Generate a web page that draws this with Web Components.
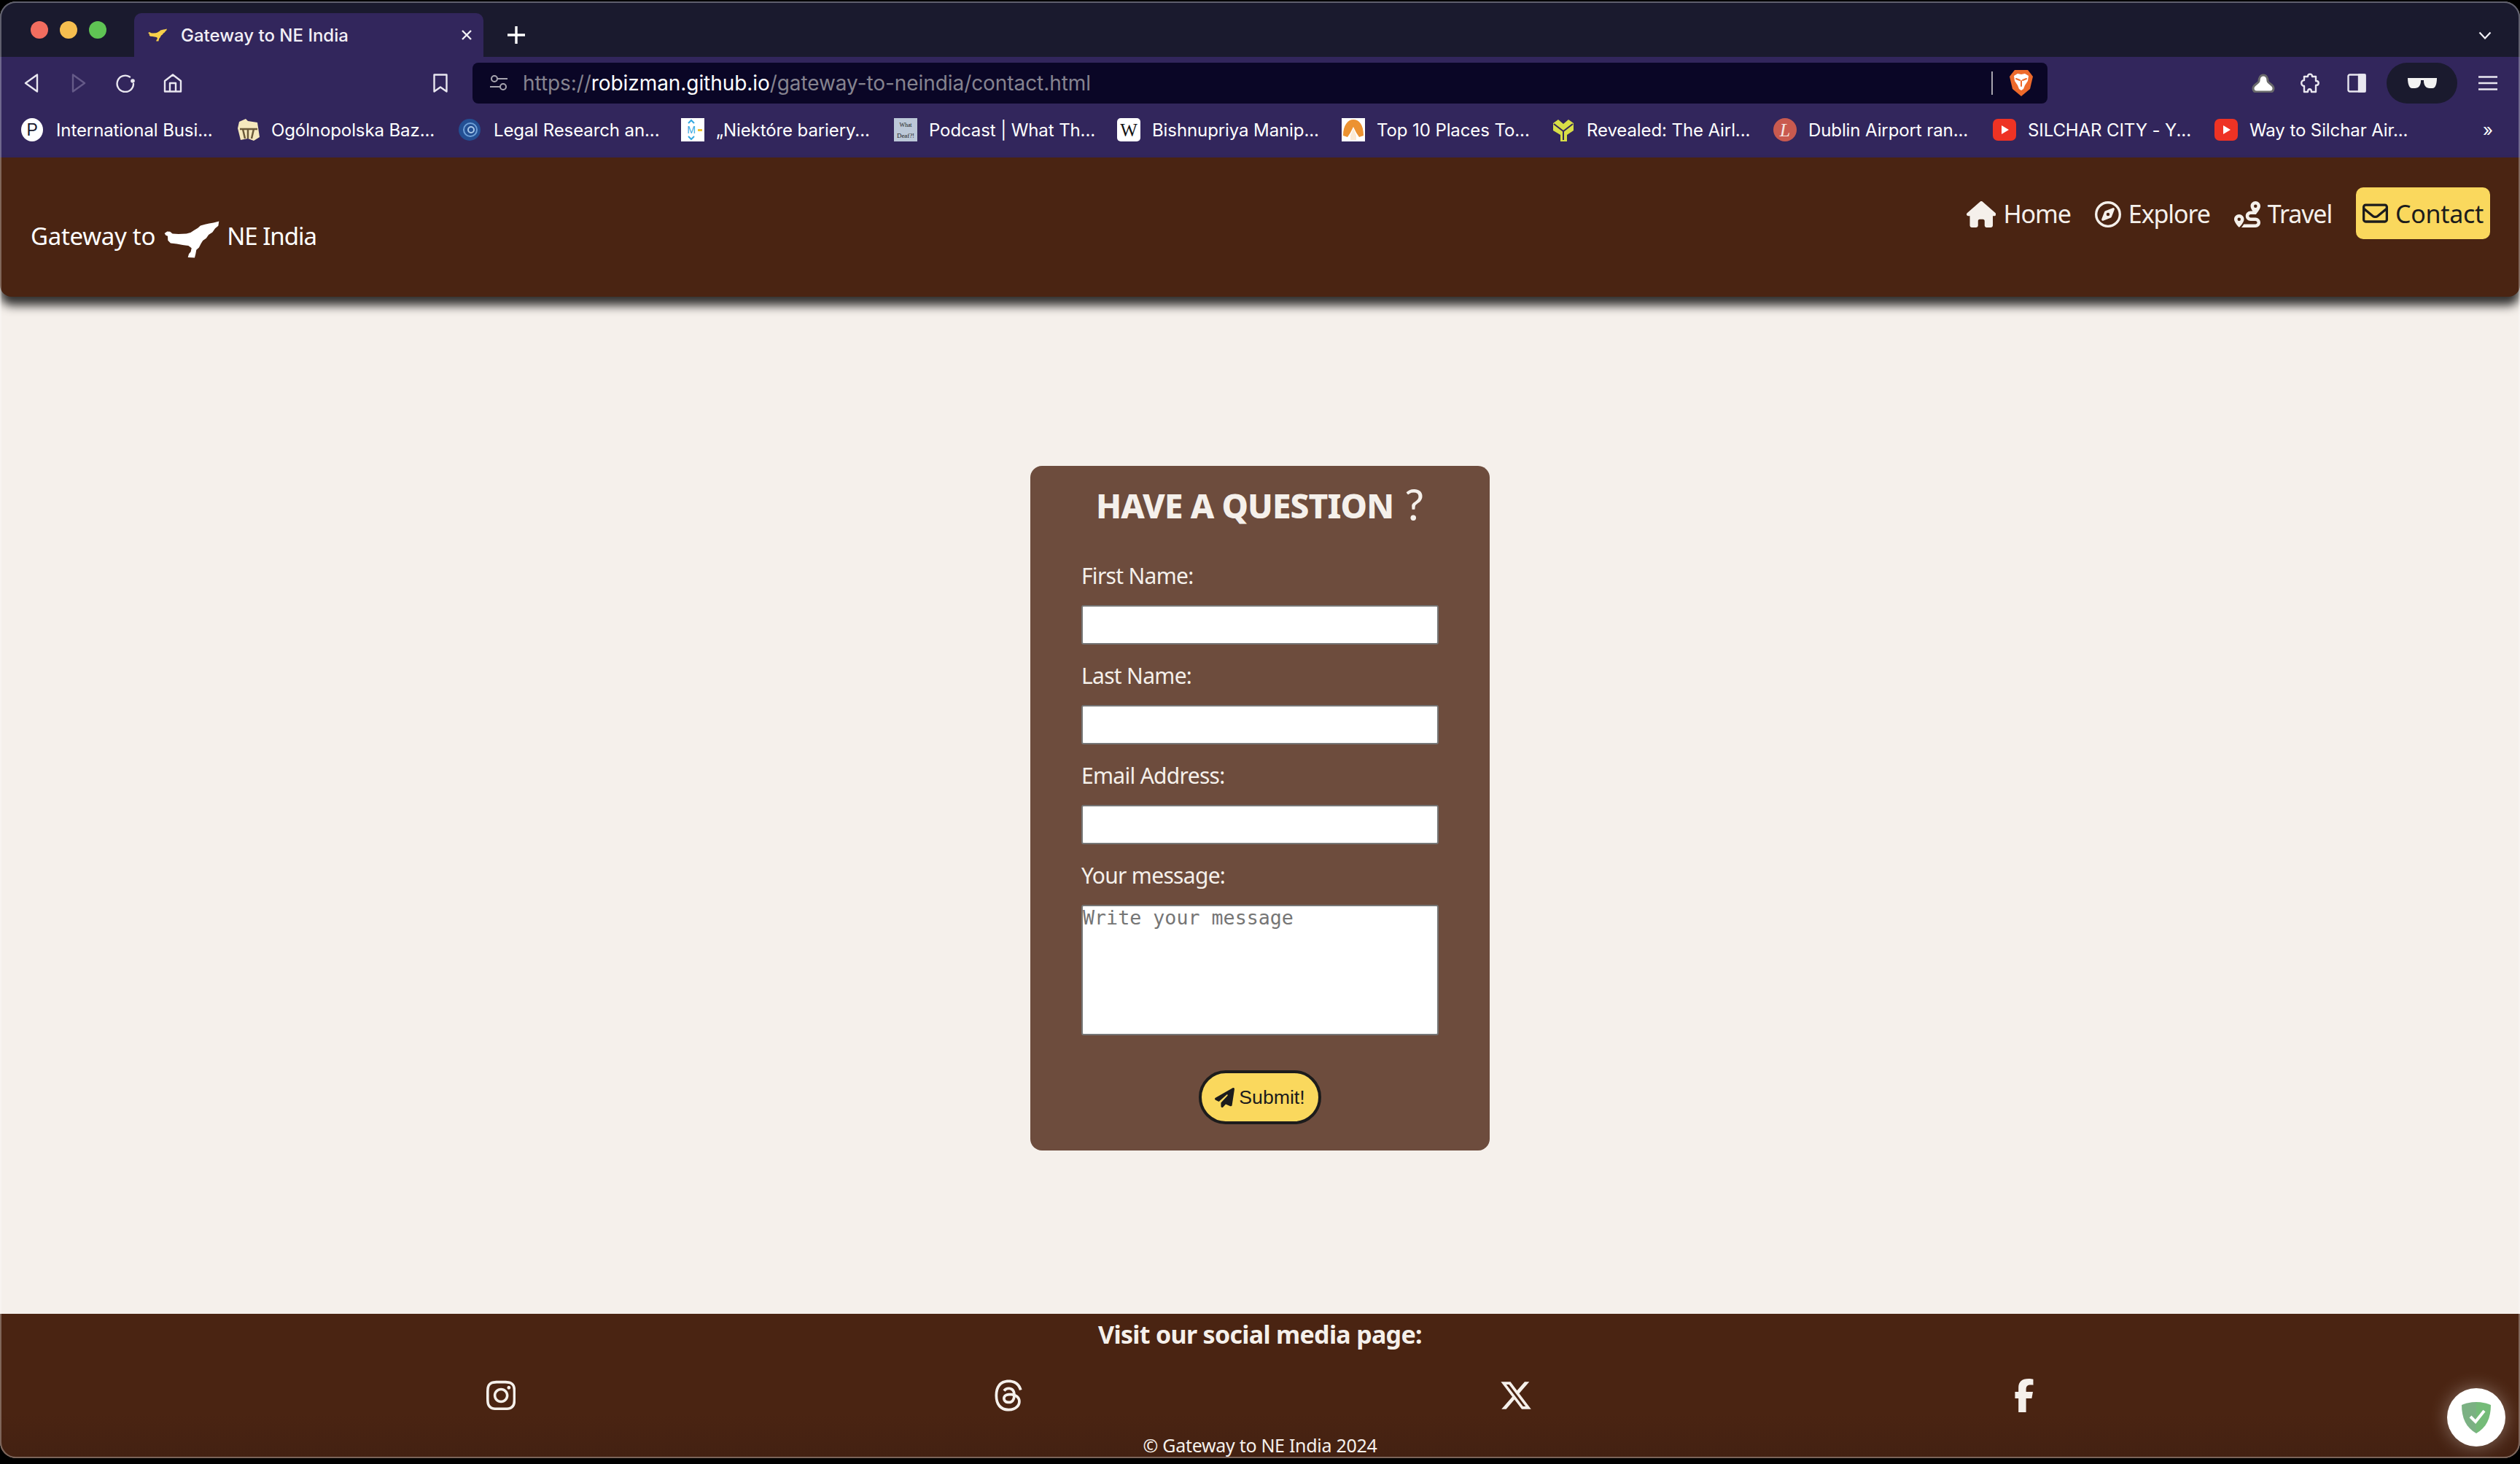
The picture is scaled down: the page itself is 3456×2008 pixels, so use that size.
<!DOCTYPE html>
<html lang="en">
<head>
<meta charset="utf-8">
<title>Gateway to NE India</title>
<style>
  html, body { margin: 0; padding: 0; background: #000; }
  body { width: 3456px; height: 2008px; overflow: hidden; font-family: "Noto Sans", sans-serif; }
</style>
</head>
<body>
<browser-window>
  <browser-tabs></browser-tabs>
  <browser-toolbar></browser-toolbar>
  <bookmark-bar>
    <bookmark-item w="295" label="International Busi..." icon="pearson"></bookmark-item>
    <bookmark-item w="305" label="Ogólnopolska Baz..." icon="baza"></bookmark-item>
    <bookmark-item w="305" label="Legal Research an..." icon="legal"></bookmark-item>
    <bookmark-item w="292" label="„Niektóre bariery..." icon="bariery"></bookmark-item>
    <bookmark-item w="306" label="Podcast | What Th..." icon="podcast"></bookmark-item>
    <bookmark-item w="308" label="Bishnupriya Manip..." icon="wiki"></bookmark-item>
    <bookmark-item w="288" label="Top 10 Places To..." icon="places"></bookmark-item>
    <bookmark-item w="304" label="Revealed: The Airl..." icon="airline"></bookmark-item>
    <bookmark-item w="301" label="Dublin Airport ran..." icon="dublin"></bookmark-item>
    <bookmark-item w="304" label="SILCHAR CITY - Y..." icon="youtube"></bookmark-item>
    <bookmark-item w="321" label="Way to Silchar Air..." icon="youtube"></bookmark-item>
  </bookmark-bar>
  <site-header>
    <nav-link icon="home">Home</nav-link>
    <nav-link icon="compass">Explore</nav-link>
    <nav-link icon="route">Travel</nav-link>
    <nav-link icon="envelope" active>Contact</nav-link>
  </site-header>
  <site-main>
    <contact-form></contact-form>
  </site-main>
  <site-footer>
    <social-link icon="instagram"></social-link>
    <social-link icon="threads"></social-link>
    <social-link icon="x"></social-link>
    <social-link icon="facebook"></social-link>
  </site-footer>
  <guard-badge></guard-badge>
</browser-window>

<script>
// the NE India silhouette, used for the site logo and the tab favicon
const MAP_PATH = 'M677 329L688 321L700 322L710 330L735 332L768 330L785 326L800 316L815 307L826 297L845 292L862 288L880 285L903 279L900 298L887 308L876 324L860 335L850 349L836 359L828 372L820 388L809 398L806 414L802 430L774 429L778 414L786 405L789 390L776 380L752 377L728 373L702 370L691 358L690 340L682 337Z';

const FA = {
  home: ['0 0 576 512', 'M575.8 255.5c0 18-15 32.1-32 32.1h-32l.7 160.2c0 2.7-.2 5.4-.5 8.1V472c0 22.1-17.9 40-40 40H456c-1.1 0-2.2 0-3.3-.1c-1.4 .1-2.8 .1-4.2 .1H416 392c-22.1 0-40-17.9-40-40V448 384c0-17.7-14.3-32-32-32H256c-17.7 0-32 14.3-32 32v64 24c0 22.1-17.9 40-40 40H160 128.1c-1.5 0-3-.1-4.5-.2c-1.2 .1-2.4 .2-3.6 .2H104c-22.1 0-40-17.9-40-40V360c0-.9 0-1.9 .1-2.8V287.6H32c-18 0-32-14-32-32.1c0-9 3-17 10-24L266.4 8c7-7 15-8 22-8s15 2 21 7L564.8 231.5c8 7 12 15 11 24z'],
  compass: ['0 0 512 512', 'M464 256A208 208 0 1 0 48 256a208 208 0 1 0 416 0zM0 256a256 256 0 1 1 512 0A256 256 0 1 1 0 256zm306.7 69.1L162.4 380.6c-19.4 7.5-38.5-11.6-31-31l55.5-144.3c3.3-8.5 9.9-15.1 18.4-18.4l144.3-55.5c19.4-7.5 38.5 11.6 31 31L325.1 306.7c-3.2 8.5-9.9 15.1-18.4 18.4zM288 256a32 32 0 1 0 -64 0 32 32 0 1 0 64 0z'],
  route: ['0 0 512 512', 'M512 96c0 50.2-59.1 125.1-84.6 155c-3.8 4.4-9.4 6.1-14.5 5H320c-17.7 0-32 14.3-32 32s14.3 32 32 32h96c53 0 96 43 96 96s-43 96-96 96H139.6c8.7-9.9 19.3-22.6 30-36.8c6.3-8.4 12.8-17.6 19-27.2H416c17.7 0 32-14.3 32-32s-14.3-32-32-32H320c-53 0-96-43-96-96s43-96 96-96h39.8c-21-31.5-39.8-67.7-39.8-96c0-53 43-96 96-96s96 43 96 96zM117.1 489.1c-3.8 4.3-7.2 8.1-10.1 11.3l-1.8 2-.2-.2c-6 4.6-14.6 4-20-1.8C59.8 473 0 402.5 0 352c0-53 43-96 96-96s96 43 96 96c0 30-21.1 67-43.5 97.9c-10.7 14.7-21.7 28-30.8 38.5l-.6 .7zM128 352a32 32 0 1 0 -64 0 32 32 0 1 0 64 0zM416 128a32 32 0 1 0 0-64 32 32 0 1 0 0 64z'],
  envelope: ['0 0 512 512', 'M64 112c-8.8 0-16 7.2-16 16v22.1L220.5 291.7c20.7 17 50.4 17 71.1 0L464 150.1V128c0-8.8-7.2-16-16-16H64zM48 212.2V384c0 8.8 7.2 16 16 16H448c8.8 0 16-7.2 16-16V212.2L322 328.8c-38.4 31.5-93.7 31.5-132 0L48 212.2zM0 128C0 92.7 28.7 64 64 64H448c35.3 0 64 28.7 64 64V384c0 35.3-28.7 64-64 64H64c-35.3 0-64-28.7-64-64V128z'],
  plane: ['0 0 512 512', 'M498.1 5.6c10.1 7 15.4 19.1 13.5 31.2l-64 416c-1.5 9.7-7.4 18.2-16 23s-18.9 5.4-28 1.6L284 427.7l-68.5 74.1c-8.9 9.7-22.9 12.9-35.2 8.1S160 493.2 160 480V396.4c0-4 1.5-7.8 4.2-10.7L331.8 202.8c5.8-6.3 5.6-16-.4-22s-15.7-6.4-22-.7L106 360.8 17.7 316.6C7.1 311.3 .3 300.7 0 288.9s5.9-22.8 16.1-28.7l448-256c10.7-6.1 23.9-5.5 34 1.4z'],
  instagram: ['0 0 448 512', 'M224.1 141c-63.6 0-114.9 51.3-114.9 114.9s51.3 114.9 114.9 114.9S339 319.5 339 255.9 287.7 141 224.1 141zm0 189.6c-41.1 0-74.7-33.5-74.7-74.7s33.5-74.7 74.7-74.7 74.7 33.5 74.7 74.7-33.6 74.7-74.7 74.7zm146.4-194.3c0 14.9-12 26.8-26.8 26.8-14.9 0-26.8-12-26.8-26.8s12-26.8 26.8-26.8 26.8 12 26.8 26.8zm76.1 27.2c-1.7-35.9-9.9-67.7-36.2-93.9-26.2-26.2-58-34.4-93.9-36.2-37-2.1-147.9-2.1-184.9 0-35.8 1.7-67.6 9.9-93.9 36.1s-34.4 58-36.2 93.9c-2.1 37-2.1 147.9 0 184.9 1.7 35.9 9.9 67.7 36.2 93.9s58 34.4 93.9 36.2c37 2.1 147.9 2.1 184.9 0 35.9-1.7 67.7-9.9 93.9-36.2 26.2-26.2 34.4-58 36.2-93.9 2.1-37 2.1-147.8 0-184.8zM398.8 388c-7.8 19.6-22.9 34.7-42.6 42.6-29.5 11.7-99.5 9-132.1 9s-102.7 2.6-132.1-9c-19.6-7.8-34.7-22.9-42.6-42.6-11.7-29.5-9-99.5-9-132.1s-2.6-102.7 9-132.1c7.8-19.6 22.9-34.7 42.6-42.6 29.5-11.7 99.5-9 132.1-9s102.7-2.6 132.1 9c19.6 7.8 34.7 22.9 42.6 42.6 11.7 29.5 9 99.5 9 132.1s2.7 102.7-9 132.1z'],
  threads: ['0 0 448 512', 'M331.5 235.7c2.2 .9 4.2 1.9 6.3 2.8c29.2 14.1 50.6 35.2 61.8 61.4c15.7 36.5 17.2 95.8-30.3 143.2c-36.2 36.2-80.3 52.5-142.6 53h-.3c-70.2-.5-124.1-24.1-160.4-70.2c-32.3-41-48.9-98.1-49.5-169.6V256v-.2C17 184.3 33.6 127.2 65.9 86.2C102.2 40.1 156.2 16.5 226.4 16h.3c70.3 .5 124.9 24 162.3 69.9c18.4 22.7 32 50 40.6 81.7l-40.4 10.8c-7.1-25.8-17.8-47.8-32.2-65.4c-29.2-35.8-73-54.2-130.5-54.6c-57 .5-100.1 18.8-128.2 54.4C72.1 146.1 58.5 194.3 58 256c.5 61.7 14.1 109.9 40.3 143.3c28 35.6 71.2 53.9 128.2 54.4c51.4-.4 85.4-12.6 113.7-40.9c32.3-32.2 31.7-71.8 21.4-95.9c-6.1-14.2-17.1-26-31.9-34.9c-3.7 26.9-11.8 48.3-24.7 64.8c-17.1 21.8-41.4 33.6-72.7 35.3c-23.6 1.3-46.3-4.4-63.9-16c-20.8-13.8-33-34.8-34.3-59.3c-2.5-48.3 35.7-83 95.2-86.4c21.1-1.2 40.9-.3 59.2 2.8c-2.4-14.8-7.3-26.6-14.6-35.2c-10-11.7-25.6-17.7-46.2-17.8H227c-16.6 0-39 4.6-53.3 26.3l-34.4-23.6c19.2-29.1 50.3-45.1 87.8-45.1h.8c62.6 .4 99.9 39.5 103.7 107.7l-.2 .2zm-156 68.8c1.3 25.1 28.4 36.8 54.6 35.3c25.6-1.4 54.6-11.4 59.5-73.2c-13.2-2.9-27.8-4.4-43.4-4.4c-4.8 0-9.6 .1-14.4 .4c-42.9 2.4-57.2 23.2-56.2 41.8l-.1 .1z'],
  x: ['0 0 512 512', 'M389.2 48h70.6L305.6 224.2 487 464H345L233.7 318.6 106.5 464H35.8L200.7 275.5 26.8 48H172.4L272.9 180.9 389.2 48zM364.4 421.8h39.1L151.1 88h-42L364.4 421.8z'],
  facebook: ['0 0 320 512', 'M80 299.3V512H196V299.3h86.5l18-97.8H196V166.9c0-51.7 20.3-71.5 72.7-71.5c16.3 0 29.4 .4 37 1.2V7.9C291.4 4 256.4 0 236.2 0C129.3 0 80 50.5 80 134.4v67.1H27v97.8H80z']
};

const faIcon = (name, h) => {
  const [box, d] = FA[name];
  return `<svg viewBox="${box}" height="${h}" fill="currentColor" style="display:block"><path d="${d}"/></svg>`;
};

// bookmark favicons, all on a 32x32 box
const FAVICONS = {
  pearson: `<ellipse cx="15" cy="16" rx="15" ry="16" fill="#fff"/><text x="15" y="24" text-anchor="middle" font-family="Liberation Sans" font-size="23" fill="#1a1a2e">P</text>`,
  baza: `<path d="M4 5L13 1L16 4L29 6L32 26L24 31L16 28L6 30L2 14Z" fill="#f5e8bd"/><path d="M5 15H29M9 15L12 28M16 15V28M24 15L21 28" stroke="#6b5a3a" stroke-width="2.5" fill="none"/>`,
  legal: `<circle cx="15" cy="16" r="15" fill="#234f93"/><circle cx="16" cy="16" r="9" fill="none" stroke="#6fa0d8" stroke-width="2"/><circle cx="17" cy="16" r="4" fill="none" stroke="#a9c8ea" stroke-width="2"/>`,
  bariery: `<rect width="32" height="32" fill="#fff"/><text x="14" y="21" text-anchor="middle" font-family="Liberation Sans" font-size="14" fill="#35a8e0">M</text><path d="M10 7L14 3L18 7M10 25L14 29L18 25" stroke="#35a8e0" stroke-width="2" fill="none"/><rect x="23" y="15" width="6" height="3" fill="#f0c330"/>`,
  podcast: `<rect width="32" height="32" fill="#bcc8d8"/><text x="16" y="12" text-anchor="middle" font-family="Liberation Serif" font-size="8" fill="#222">What</text><text x="16" y="27" text-anchor="middle" font-family="Liberation Serif" font-size="9" fill="#222">Deaf?!</text>`,
  wiki: `<rect width="32" height="32" rx="5" fill="#fff"/><text x="16" y="25" text-anchor="middle" font-family="Liberation Serif" font-size="25" fill="#111">W</text>`,
  places: `<rect width="32" height="32" fill="#fff"/><path d="M2 24C2 9 9 2 16 2C24 2 30 9 30 24L24 26L20 20L16 12L12 20L8 26Z" fill="#ec9231"/><path d="M16 14L20 24V30H12V24Z" fill="#fbe9d4"/>`,
  airline: `<path d="M2 7L9 2L16 8L23 2L30 7V17L21 23V32H12V23L2 17Z" fill="#d8de47"/><path d="M3 8L16 18L29 8M16 18V30" stroke="#32265c" stroke-width="2" fill="none"/>`,
  dublin: `<ellipse cx="16" cy="16" rx="16" ry="16" fill="#c95a4f"/><text x="16" y="25" text-anchor="middle" font-family="Liberation Serif" font-style="italic" font-size="26" fill="#f6e6e2">L</text>`,
  youtube: `<rect y="1" width="32" height="30" rx="7" fill="#ee3324"/><path d="M12 10L22 16L12 22Z" fill="#fff"/>`
};

class BrowserWindow extends HTMLElement {
  constructor() {
    super();
    this.attachShadow({ mode: 'open' });
    this.shadowRoot.innerHTML = `
      <style>
        :host {
          display: flex;
          flex-direction: column;
          position: relative;
          box-sizing: border-box;
          width: 3456px;
          height: 1998px;
          margin-top: 2px;
          border-radius: 22px;
          overflow: hidden;
          background: #f5f0eb;
        }
        .edge {
          position: absolute;
          inset: 0;
          border: 2px solid rgba(255, 255, 255, 0.3);
          border-radius: 22px;
          pointer-events: none;
          z-index: 5;
        }
      </style>
      <slot></slot>
      <div class="edge"></div>
    `;
  }
}

class BrowserTabs extends HTMLElement {
  constructor() {
    super();
    this.attachShadow({ mode: 'open' });
    this.shadowRoot.innerHTML = `
      <style>
        :host {
          display: flex;
          flex: none;
          height: 76px;
          align-items: flex-end;
          background: #1a1a2e;
          font-family: Inter, "Noto Sans", sans-serif;
          color: #f2f0f6;
        }
        .lights { display: flex; gap: 16px; padding: 0 0 25px 42px; width: 184px; flex: none; box-sizing: border-box; align-self: flex-end; }
        .lights i { width: 24px; height: 24px; border-radius: 50%; display: block; flex: none; }
        .tab {
          display: flex;
          align-items: center;
          width: 479px;
          height: 60px;
          box-sizing: border-box;
          padding: 0 16px 0 19px;
          border-radius: 10px 10px 0 0;
          background: #32265c;
        }
        .tab svg.fav { width: 26px; height: 18px; margin-right: 19px; }
        .tab span { flex: 1; font-size: 24px; font-weight: 500; white-space: nowrap; }
        .plus { margin: 0 0 18px 33px; }
        .chevron { margin: 0 39px 24px auto; }
      </style>
      <div class="lights">
        <i style="background:#f26d5f"></i><i style="background:#f6be4f"></i><i style="background:#5fc454"></i>
      </div>
      <div class="tab">
        <svg class="fav" viewBox="675 278 230 153"><path d="${MAP_PATH}" fill="#f8d04a"/></svg>
        <span>Gateway to NE India</span>
        <svg width="14" height="14" viewBox="0 0 14 14"><path d="M1 1L13 13M13 1L1 13" stroke="#f2f0f6" stroke-width="2.4"/></svg>
      </div>
      <svg class="plus" width="24" height="24" viewBox="0 0 24 24"><path d="M12 0V24M0 12H24" stroke="#fff" stroke-width="3.4"/></svg>
      <svg class="chevron" width="18" height="11" viewBox="0 0 18 11"><path d="M1.5 1.5L9 9.5L16.5 1.5" stroke="#f2f0f6" stroke-width="2.2" fill="none"/></svg>
    `;
  }
}

class BrowserToolbar extends HTMLElement {
  constructor() {
    super();
    this.attachShadow({ mode: 'open' });
    this.shadowRoot.innerHTML = `
      <style>
        :host {
          display: flex;
          flex: none;
          height: 64px;
          align-items: flex-end;
          box-sizing: border-box;
          background: #32265c;
          font-family: Inter, "Noto Sans", sans-serif;
        }
        svg { display: block; flex: none; fill: none; stroke: #e9e7f0; stroke-width: 2.4; stroke-linejoin: round; stroke-linecap: round; }
        .btn { height: 56px; display: flex; align-items: center; flex: none; }
        .url {
          display: flex;
          align-items: center;
          width: 2160px;
          height: 56px;
          flex: none;
          margin-left: 34px;
          border-radius: 8px;
          background: #0a0626;
        }
        .url .text { flex: 1; margin-left: 21px; font-size: 28px; letter-spacing: -0.07px; color: #85838f; white-space: nowrap; }
        .url b { font-weight: 400; color: #fff; }
        .url .sep { width: 2px; height: 32px; background: #a6a4ae; margin-right: 23px; }
        .url .lion { margin-right: 20px; stroke: none; }
        .pill {
          width: 97px; height: 56px; flex: none; margin-left: 28px;
          border-radius: 28px; background: #1a1a2e;
          display: flex; align-items: center; justify-content: center;
        }
      </style>
      <div class="btn" style="margin-left:33px"><svg width="20" height="26" viewBox="0 0 20 26"><path d="M18 1.5L2 13L18 24.5Z"/></svg></div>
      <div class="btn" style="margin-left:45px"><svg width="20" height="26" viewBox="0 0 20 26" style="stroke:#655a88"><path d="M2 1.5L18 13L2 24.5Z"/></svg></div>
      <div class="btn" style="margin-left:41px"><svg width="26" height="26" viewBox="0 0 26 26"><path d="M19 4.5A11.2 11.2 0 1 0 24 14"/><circle cx="23" cy="10" r="2.8" fill="#e9e7f0" stroke="none"/></svg></div>
      <div class="btn" style="margin-left:39px"><svg width="26" height="26" viewBox="0 0 26 26"><path d="M2 10L13 1.5L24 10V24.5H2ZM9 24.5V13H17V24.5"/></svg></div>
      <div class="btn" style="margin-left:344px"><svg width="20" height="26" viewBox="0 0 20 26"><path d="M1.5 1.5H18.5V24.5L10 18.5L1.5 24.5Z"/></svg></div>
      <div class="url">
        <svg width="24" height="22" viewBox="0 0 24 22" style="margin-left:24px;stroke:#a6a4ae;stroke-width:2"><circle cx="6" cy="5" r="4"/><path d="M11 5H24M0 16H13"/><circle cx="18" cy="16" r="4"/></svg>
        <div class="text">https://<b>robizman.github.io</b>/gateway-to-neindia/contact.html</div>
        <div class="sep"></div>
        <svg class="lion" width="32" height="36" viewBox="0 0 32 36">
          <path d="M7 0H25L29 5L32 9L28 26L16 36L4 26L0 9L3 5Z" fill="#ee6a2b"/>
          <path d="M6 8L11 5L16 6L21 5L26 8L25 15L21 21L19 26L16 28L13 26L11 21L7 15Z" fill="#fff"/>
          <path d="M9 12L14 14M23 12L18 14M16 15V22" stroke="#ee6a2b" stroke-width="2" fill="none"/>
        </svg>
      </div>
      <div class="btn" style="margin-left:279px"><svg width="34" height="26" viewBox="0 0 34 26" style="stroke:#6a6a6c;stroke-width:3"><path d="M17 2C13 2 11 6 11 10C11 13 3 15 3 20C3 24 5 25 8 25H26C29 25 31 24 31 20C31 15 23 13 23 10C23 6 21 2 17 2Z" fill="#fff"/></svg></div>
      <div class="btn" style="margin-left:33px"><svg width="28" height="28" viewBox="0 0 28 28"><path d="M6 5H11C11 0.5 17 0.5 17 5H22V11C27 11 27 17 22 17V26H16C16 21 11 21 11 26H6V18C1 18 1 10 6 10Z"/></svg></div>
      <div class="btn" style="margin-left:37px"><svg width="26" height="26" viewBox="0 0 26 26"><rect x="1.5" y="1.5" width="23" height="23" rx="2"/><rect x="16" y="1.5" width="8.5" height="23" fill="#e9e7f0"/></svg></div>
      <div class="pill"><svg width="40" height="14" viewBox="0 0 40 14" style="stroke:none"><path d="M0 0H18V4C18 10 15 14 10 14H6C2 14 0 8 0 0ZM22 0H40C40 8 38 14 34 14H30C25 14 22 10 22 4Z" fill="#f2f2f2"/><rect x="16" y="0" width="8" height="3" fill="#f2f2f2"/></svg></div>
      <div class="btn" style="margin-left:29px"><svg width="26" height="20" viewBox="0 0 26 20" style="stroke-linecap:butt"><path d="M0 1.5H26M0 10H26M0 18.5H26"/></svg></div>
    `;
  }
}

class BookmarkBar extends HTMLElement {
  constructor() {
    super();
    this.attachShadow({ mode: 'open' });
    this.shadowRoot.innerHTML = `
      <style>
        :host {
          display: flex;
          flex: none;
          align-items: center;
          height: 74px;
          box-sizing: border-box;
          padding: 0 0 2px 29px;
          background: #32265c;
          font-family: Inter, "Noto Sans", sans-serif;
          color: #fff;
        }
        .more { font-size: 24px; margin-left: 47px; }
      </style>
      <slot></slot>
      <span class="more">»</span>
    `;
  }
}

class BookmarkItem extends HTMLElement {
  constructor() {
    super();
    this.attachShadow({ mode: 'open' });
  }
  connectedCallback() {
    this.shadowRoot.innerHTML = `
      <style>
        :host {
          display: flex;
          flex: none;
          align-items: center;
          width: ${this.getAttribute('w')}px;
          font-size: 24px;
          letter-spacing: -0.1px;
          white-space: nowrap;
        }
        svg { width: 32px; height: 32px; margin-right: 16px; flex: none; }
      </style>
      <svg viewBox="0 0 32 32">${FAVICONS[this.getAttribute('icon')]}</svg>
      <span>${this.getAttribute('label')}</span>
    `;
  }
}

class SiteHeader extends HTMLElement {
  constructor() {
    super();
    this.attachShadow({ mode: 'open' });
    this.shadowRoot.innerHTML = `
      <style>
        :host {
          display: flex;
          flex: none;
          justify-content: space-between;
          align-items: flex-start;
          position: relative;
          z-index: 2;
          height: 191px;
          box-sizing: border-box;
          padding: 41px 41px 0 42px;
          border-radius: 0 0 16px 16px;
          background: #4a2412;
          color: #f5f0eb;
          box-shadow: 0 12px 14px rgba(0, 0, 0, 0.8);
        }
        .brand {
          display: flex;
          align-items: center;
          gap: 10px;
          margin-top: 46px;
          height: 50px;
          color: #fff;
          font-size: 33px;
          letter-spacing: -0.3px;
          white-space: nowrap;
        }
        .brand span { margin-bottom: 8px; line-height: 40px; }
        .brand span + svg { margin-left: 2px; }
        .brand svg + span { letter-spacing: -1px; }
        .brand svg { display: block; width: 76px; height: 51px; }
        nav { display: flex; align-items: center; }
      </style>
      <div class="brand">
        <span>Gateway to</span>
        <svg viewBox="675 278 230 153"><path d="${MAP_PATH}" fill="#fff"/></svg>
        <span>NE India</span>
      </div>
      <nav><slot></slot></nav>
    `;
  }
}

class NavLink extends HTMLElement {
  constructor() {
    super();
    this.attachShadow({ mode: 'open' });
  }
  connectedCallback() {
    const active = this.hasAttribute('active');
    this.shadowRoot.innerHTML = `
      <style>
        :host {
          display: flex;
          align-items: center;
          height: 71px;
          box-sizing: border-box;
          padding: 0 9px;
          margin-left: ${active ? 24 : 15}px;
          gap: 10px;
          border-radius: 10px;
          font-size: 34px;
          letter-spacing: ${active ? -0.3 : -1.1}px;
          color: ${active ? '#1c1c1c' : '#f5f0eb'};
          background: ${active ? '#fad85d' : 'transparent'};
          white-space: nowrap;
        }
        svg { margin-top: ${active ? 0 : 3}px; }
      </style>
      ${faIcon(this.getAttribute('icon'), this.getAttribute('icon') === 'envelope' ? 35 : 36)}
      <slot></slot>
    `;
  }
}

class SiteMain extends HTMLElement {
  constructor() {
    super();
    this.attachShadow({ mode: 'open' });
    this.shadowRoot.innerHTML = `
      <style>
        :host {
          display: flex;
          flex: 1;
          justify-content: center;
          align-items: flex-start;
          padding-top: 232px;
          min-height: 0;
        }
      </style>
      <slot></slot>
    `;
  }
}

class ContactForm extends HTMLElement {
  constructor() {
    super();
    this.attachShadow({ mode: 'open' });
    this.shadowRoot.innerHTML = `
      <style>
        :host {
          display: block;
          width: 630px;
          box-sizing: border-box;
          padding: 24px 70px 36px;
          border-radius: 16px;
          background: #6d4c3d;
          color: #f5f0eb;
        }
        h2 {
          margin: 0 0 47px;
          text-align: center;
          font-size: 46px;
          line-height: 60px;
          font-weight: 800;
          letter-spacing: -0.9px;
          white-space: nowrap;
        }
        h2 span { font-family: Lato, sans-serif; font-weight: 400; font-size: 60px; line-height: 50px; letter-spacing: 0; margin-left: 4px; vertical-align: -3px; }
        label {
          display: block;
          margin: 23px 0 20px;
          font-size: 30px;
          line-height: 40px;
          letter-spacing: -0.7px;
        }
        input, textarea {
          display: block;
          box-sizing: border-box;
          width: 100%;
          margin: 0;
          padding: 0;
          border: 2px solid #767676;
          border-radius: 3px;
          background: #fff;
        }
        input { height: 54px; }
        textarea {
          height: 179px;
          resize: none;
          font: 26.67px "DejaVu Sans Mono", monospace;
          line-height: 31px;
        }
        textarea::placeholder { color: #757575; }
        button {
          display: flex;
          align-items: center;
          gap: 6px;
          margin: 48px auto 0;
          height: 74px;
          width: 168px;
          box-sizing: border-box;
          padding: 0;
          justify-content: center;
          border: 4px solid #1c1c1c;
          border-radius: 37px;
          background: #fad85d;
          color: #1c1c1c;
          font: 26.67px "Liberation Sans", Arial, sans-serif;
        }
      </style>
      <h2>HAVE A QUESTION <span>?</span></h2>
      <label>First Name:</label>
      <input type="text">
      <label>Last Name:</label>
      <input type="text">
      <label>Email Address:</label>
      <input type="email">
      <label>Your message:</label>
      <textarea placeholder="Write your message"></textarea>
      <button type="button">${faIcon('plane', 27)}Submit!</button>
    `;
  }
}

class SiteFooter extends HTMLElement {
  constructor() {
    super();
    this.attachShadow({ mode: 'open' });
    this.shadowRoot.innerHTML = `
      <style>
        :host {
          display: block;
          flex: none;
          height: 198px;
          box-sizing: border-box;
          background: linear-gradient(#4a2412 70%, #432112);
          color: #f5f0eb;
          text-align: center;
        }
        h3 {
          margin: 0;
          padding-top: 6px;
          font-size: 34px;
          line-height: 44px;
          font-weight: 700;
          letter-spacing: -0.7px;
        }
        .social {
          display: grid;
          grid-template-columns: repeat(4, 696px);
          justify-content: center;
          padding: 40px 0 0 6px;
          height: 44px;
        }
        p {
          margin: 28px 0 0;
          font-size: 25px;
          line-height: 36px;
          letter-spacing: -0.3px;
        }
      </style>
      <h3>Visit our social media page:</h3>
      <div class="social"><slot></slot></div>
      <p>© Gateway to NE India 2024</p>
    `;
  }
}

class SocialLink extends HTMLElement {
  constructor() {
    super();
    this.attachShadow({ mode: 'open' });
  }
  connectedCallback() {
    this.shadowRoot.innerHTML = `
      <style>
        :host { display: flex; justify-content: center; align-items: center; height: 44px; }
      </style>
      ${faIcon(this.getAttribute('icon'), 46)}
    `;
  }
}

class GuardBadge extends HTMLElement {
  constructor() {
    super();
    this.attachShadow({ mode: 'open' });
    this.shadowRoot.innerHTML = `
      <style>
        :host {
          position: absolute;
          right: 20px;
          bottom: 16px;
          z-index: 4;
          display: flex;
          align-items: center;
          justify-content: center;
          width: 80px;
          height: 80px;
          border-radius: 50%;
          background: #fff;
          box-shadow: 0 0 24px rgba(255, 255, 255, 0.35);
        }
      </style>
      <svg width="40" height="43" viewBox="0 0 40 43">
        <path d="M20 0C12 0 5 2 0 4C0 22 6 35 20 43Z" fill="#7bb183"/>
        <path d="M20 0C28 0 35 2 40 4C40 22 34 35 20 43Z" fill="#74bb78"/>
        <path d="M12 20L19 27L31 12" stroke="#fff" stroke-width="4" fill="none"/>
      </svg>
    `;
  }
}

customElements.define('browser-window', BrowserWindow);
customElements.define('browser-tabs', BrowserTabs);
customElements.define('browser-toolbar', BrowserToolbar);
customElements.define('bookmark-bar', BookmarkBar);
customElements.define('bookmark-item', BookmarkItem);
customElements.define('site-header', SiteHeader);
customElements.define('nav-link', NavLink);
customElements.define('site-main', SiteMain);
customElements.define('contact-form', ContactForm);
customElements.define('site-footer', SiteFooter);
customElements.define('social-link', SocialLink);
customElements.define('guard-badge', GuardBadge);
</script>
</body>
</html>
